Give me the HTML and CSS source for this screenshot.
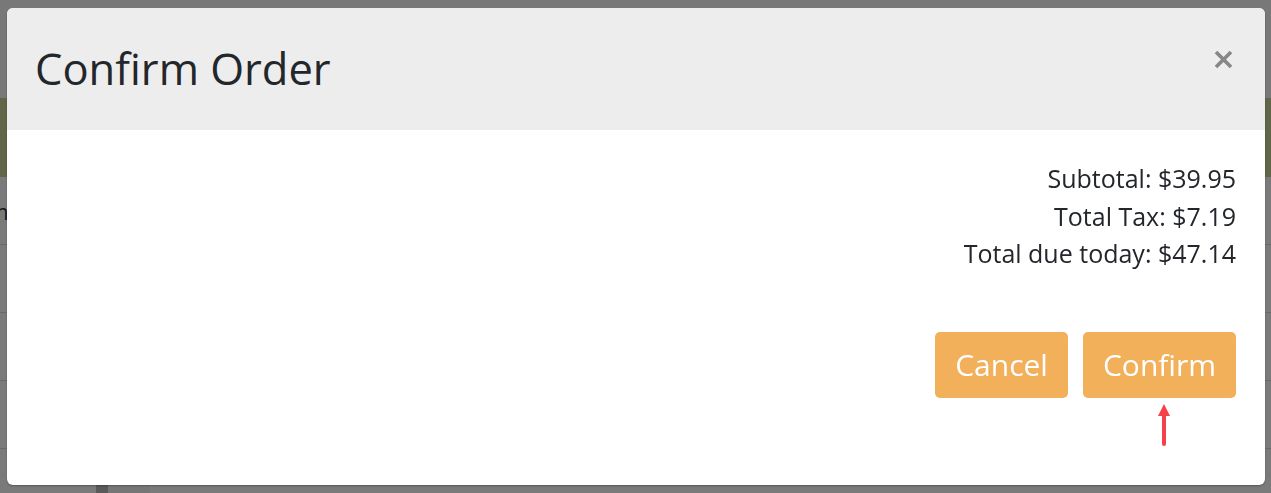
FILE: index.html
```html
<!DOCTYPE html>
<html lang="en">
<head>
<meta charset="utf-8">
<title>Confirm Order</title>
<link rel="stylesheet" href="styles.css">
</head>
<body>
<div class="page">
  <div class="page-top"></div>
  <div class="page-banner"></div>
  <div class="page-row"><span class="page-text">Items</span></div>
  <div class="page-row"></div>
  <div class="page-row"></div>
  <div class="page-row"></div>
  <div class="page-row page-row-last"><span class="page-dark"></span><span class="page-light"></span></div>
</div>

<div class="overlay">
  <div class="modal">
    <div class="modal-header">
      <h1 class="modal-title">Confirm Order</h1>
      <button class="modal-close" aria-label="Close">
        <svg width="19" height="19" viewBox="0 0 19 19"><path d="M2 2 L17 17 M17 2 L2 17" stroke="#878787" stroke-width="3.6" stroke-linecap="butt"/></svg>
      </button>
    </div>
    <div class="modal-body">
      <div class="totals">
        <div>Subtotal: $39.95</div>
        <div>Total Tax: $7.19</div>
        <div>Total due today: $47.14</div>
      </div>
      <div class="actions">
        <button class="btn">Cancel</button>
        <button class="btn btn-confirm">Confirm
          <svg class="arrow" width="14" height="42" viewBox="0 0 14 42"><path d="M7 0 L13 12 L1 12 Z" fill="#f6404a"/><path d="M7 10 L7 40" stroke="#f6404a" stroke-width="4" stroke-linecap="round"/></svg>
        </button>
      </div>
    </div>
  </div>
</div>
</body>
</html>
```

FILE: styles.css
```css
html, body {
  margin: 0;
  padding: 0;
  height: 100%;
  overflow: hidden;
}
body {
  background: #ffffff;
  font-family: "Open Sans", "Noto Sans", sans-serif;
}
.page {
  display: flex;
  flex-direction: column;
  height: 100%;
  overflow: hidden;
}
.page-top {
  flex: none;
  height: 98px;
  background: #fafafa;
}
.page-banner {
  flex: none;
  height: 79px;
  background: #c6d796;
}
.page-row {
  flex: none;
  height: 67px;
  border-bottom: 1px solid #dcdcdc;
  display: flex;
  align-items: center;
  overflow: hidden;
}
.page-text {
  margin-left: -38px;
  font-size: 22px;
  color: #333;
  white-space: nowrap;
}
.page-row-last {
  align-items: stretch;
  flex: 1;
  border-bottom: 0;
}
.page-dark {
  margin-left: 96px;
  width: 12px;
  background: #bcbcbc;
}
.page-light {
  width: 42px;
  background: #f6f6f6;
}
.overlay {
  position: fixed;
  inset: 0;
  background: rgba(0, 0, 0, 0.52);
  padding: 8px 6px 8px 7px;
}
.modal {
  background: #ffffff;
  border-radius: 6px;
  height: 477px;
  overflow: hidden;
  display: flex;
  flex-direction: column;
  box-shadow: 0 1px 2px rgba(0,0,0,0.3);
}
.modal-header {
  background: #ededed;
  height: 122px;
  flex: none;
  box-sizing: border-box;
  display: flex;
  justify-content: space-between;
  align-items: flex-start;
  padding: 0 32px 0 28px;
}
.modal-title {
  margin: 33px 0 0 0;
  font-size: 43.5px;
  line-height: 55px;
  font-weight: 400;
  color: #23262b;
}
.modal-close {
  margin-top: 42px;
  background: none;
  border: 0;
  padding: 0;
  width: 19px;
  height: 19px;
  display: block;
  cursor: pointer;
}
.modal-close svg {
  display: block;
}
.modal-body {
  padding: 30px 29px 0 30px;
  display: flex;
  flex-direction: column;
  align-items: flex-end;
}
.totals {
  text-align: right;
  font-size: 25px;
  line-height: 37.5px;
  color: #23262b;
}
.actions {
  margin-top: 59px;
  display: flex;
  gap: 15px;
}
.btn {
  position: relative;
  font-family: "Open Sans", "Noto Sans", sans-serif;
  font-size: 30px;
  line-height: 46px;
  padding: 10px 20px;
  height: 66px;
  color: #ffffff;
  background: #f2b05b;
  border: 0;
  border-radius: 5px;
  cursor: pointer;
}
.arrow {
  position: absolute;
  left: 74px;
  top: 72px;
}
```
